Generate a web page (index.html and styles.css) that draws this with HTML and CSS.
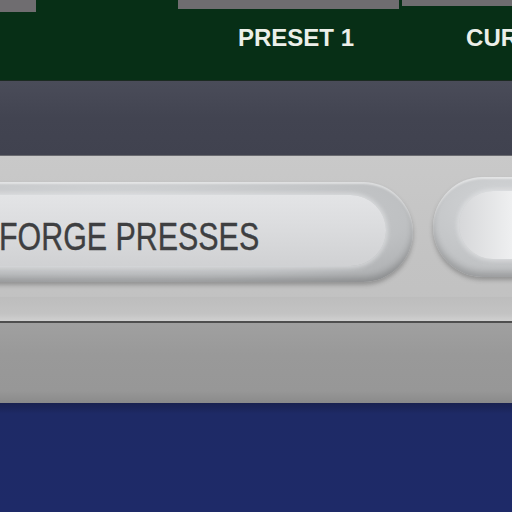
FILE: index.html
```html
<!DOCTYPE html>
<html>
<head>
<meta charset="utf-8">
<link rel="stylesheet" href="styles.css">
</head>
<body>
<div class="screen">
  <header class="top">
    <div class="tabs">
      <div class="tab tab-a"></div>
      <div class="tab tab-b"></div>
      <div class="tab tab-c"></div>
    </div>
    <div class="labels">
      <span class="label label-preset">PRESET 1</span>
      <span class="label label-cur">CURRENT</span>
    </div>
  </header>
  <div class="band"></div>
  <section class="panel">
    <div class="pill-row">
      <div class="pill pill-main">
        <div class="face"><span class="pill-text">FORGE PRESSES</span></div>
      </div>
      <div class="pill pill-next">
        <div class="face"></div>
      </div>
    </div>
    <div class="lip"></div>
  </section>
  <div class="lower"></div>
  <div class="blue"></div>
</div>
</body>
</html>
```
FILE: styles.css
```css
html, body {
  margin: 0;
  padding: 0;
  width: 512px;
  height: 512px;
  overflow: hidden;
  font-family: "Liberation Sans", Arial, sans-serif;
}
.screen {
  display: flex;
  flex-direction: column;
  width: 512px;
  height: 512px;
  overflow: hidden;
}
.top {
  height: 80px;
  background: #072f16;
  display: flex;
  flex-direction: column;
  border-bottom: 1px solid #1c2a22;
}
.tabs {
  display: flex;
  align-items: flex-start;
  height: 12px;
}
.tab {
  background: #6f6d70;
}
.tab-a { width: 36px; height: 12px; }
.tab-b { width: 222px; height: 9px; margin-left: 142px; }
.tab-c { width: 110px; height: 6px; margin-left: 3px; }
.labels {
  display: flex;
  align-items: center;
  height: 51px;
  white-space: nowrap;
}
.label {
  color: #ecefe9;
  font-weight: bold;
  font-size: 24px;
}
.label-preset { margin-left: 238px; }
.label-cur { margin-left: 112px; }
.band {
  height: 74px;
  background: linear-gradient(#4a4c59, #424451 50%, #40424f);
  border-bottom: 1px solid #6a6b70;
}
.panel {
  height: 167px;
  background: linear-gradient(#c9c9c9, #c3c3c3 60%, #c1c1c1);
  display: flex;
  flex-direction: column;
  overflow: hidden;
}
.pill-row {
  display: flex;
  gap: 20px;
  margin-top: 26px;
  margin-left: -90px;
  align-items: flex-start;
}
.pill {
  flex: none;
  height: 100px;
  border-radius: 50px;
  box-sizing: border-box;
  background: radial-gradient(ellipse at 40% 30%, #d5d7d9, #bec0c2 70%, #a6a8aa);
  box-shadow: 0 3px 4px rgba(60,60,60,.35), inset 0 -5px 6px rgba(0,0,0,.18), inset 0 2px 2px rgba(255,255,255,.5);
  display: flex;
}
.pill-main {
  width: 503px;
  padding: 13px 27px 16px 0;
}
.pill-next {
  width: 200px;
  margin-top: -5px;
  padding: 14px 0 18px 26px;
}
.face {
  flex: 1;
  border-radius: 36px;
  background: linear-gradient(#e3e4e6, #dcdddf 40%, #d0d1d3);
  box-shadow: 0 0 4px 2px rgba(230,232,234,.6);
  display: flex;
  align-items: center;
}
.pill-next .face {
  background: linear-gradient(90deg, #d6d7d9, #eeeff0 30%, #e6e7e9);
}
.pill-text {
  margin-left: 89px;
  margin-top: 14px;
  font-size: 38px;
  color: #3e3f41;
  white-space: nowrap;
  transform: scaleX(0.8);
  transform-origin: left center;
  -webkit-text-stroke: 0.4px #3e3f41;
}
.lip {
  margin-top: auto;
  height: 24px;
  background: linear-gradient(#bdbdbd, #c3c3c3 70%, #d0d0d0);
  border-bottom: 2px solid #4f4f4f;
}
.lower {
  height: 80px;
  background: linear-gradient(#a0a0a0, #999999 40%, #979797 85%, #8a8a8a);
}
.blue {
  flex: 1;
  background: linear-gradient(#1a2250, #1e2a66 10%, #1e2a68);
}
```
